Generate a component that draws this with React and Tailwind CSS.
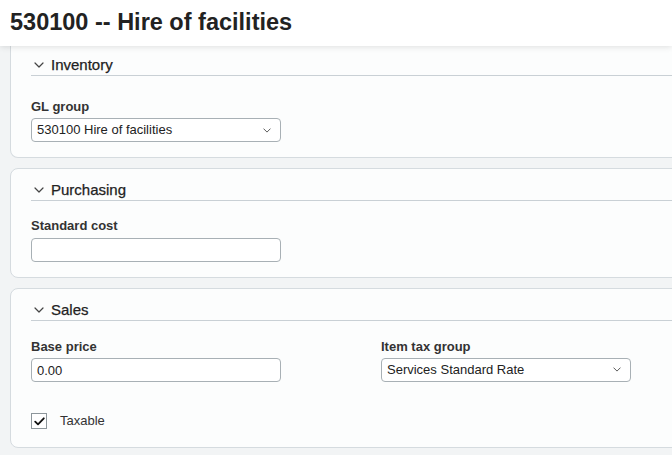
import React, { useState } from "react";

const Chevron = ({ className }) => (
    <svg className={className} viewBox="0 0 10 6" fill="none" stroke="currentColor" strokeWidth="1.2" strokeLinecap="round" strokeLinejoin="round">
        <path d="M1 1l4 4 4-4" />
    </svg>
);

const SectionHeader = ({ title }) => (
    <div className="flex items-center h-[20px] border-b border-[#c9d0d5] box-content">
        <Chevron className="w-[10px] h-[6px] ml-[3px] mr-[7px] text-[#444]" />
        <span className="text-[15px] font-medium text-[#222] leading-[20px] [-webkit-text-stroke:0.25px_#222]">{title}</span>
    </div>
);

const Label = ({ children }) => (
    <label className="block text-[13px] font-bold text-[#333] leading-[16px] mb-[3px]">{children}</label>
);

const SelectBox = ({ value }) => (
    <div className="w-[250px] h-[24px] border border-[#a8b0b5] rounded-[4px] bg-white flex items-center justify-between pl-[5px] pr-[9px]">
        <span className="text-[13px] text-[#222]">{value}</span>
        <Chevron className="w-[8px] h-[5px] text-[#555]" />
    </div>
);

const TextBox = ({ value }) => (
    <input
        type="text"
        readOnly
        value={value}
        className="w-[250px] h-[24px] border border-[#a8b0b5] rounded-[4px] bg-white px-[5px] text-[13px] text-[#222] focus:outline-none"
    />
);

const App = () => {
    const [taxable, setTaxable] = useState(true);

    return (
        <div className="w-[672px] h-[455px] overflow-hidden bg-[#f2f4f5] font-['Liberation_Sans',Arial,sans-serif]">
            {/* Page header */}
            <header className="relative z-10 h-[46px] bg-white shadow-[0_1px_6px_rgba(0,0,0,0.12)] pl-[10px] flex items-center">
                <h1 className="text-[23.5px] font-bold text-[#222] leading-none">530100 -- Hire of facilities</h1>
            </header>

            <div className="pl-[10px] flex flex-col gap-[10px]">
                {/* Inventory */}
                <div className="w-[700px] bg-[#fcfdfd] border border-t-0 border-[#d5dbdf] rounded-b-[8px] pl-[20px] pt-[9px] pb-[15px]">
                    <SectionHeader title="Inventory" />
                    <div className="mt-[23px]">
                        <Label>GL group</Label>
                        <SelectBox value="530100 Hire of facilities" />
                    </div>
                </div>

                {/* Purchasing */}
                <div className="w-[700px] bg-[#fcfdfd] border border-[#d5dbdf] rounded-[8px] pl-[20px] pt-[11px] pb-[15px]">
                    <SectionHeader title="Purchasing" />
                    <div className="mt-[17px]">
                        <Label>Standard cost</Label>
                        <TextBox value="" />
                    </div>
                </div>

                {/* Sales */}
                <div className="w-[700px] bg-[#fcfdfd] border border-[#d5dbdf] rounded-[8px] pl-[20px] pt-[11px] pb-[16px]">
                    <SectionHeader title="Sales" />
                    <div className="mt-[18px] grid grid-cols-[350px_350px]">
                        <div>
                            <Label>Base price</Label>
                            <TextBox value="0.00" />
                        </div>
                        <div>
                            <Label>Item tax group</Label>
                            <SelectBox value="Services Standard Rate" />
                        </div>
                    </div>
                    <label className="mt-[29px] h-[20px] flex items-center cursor-pointer">
                        <input
                            type="checkbox"
                            className="hidden"
                            checked={taxable}
                            onChange={(e) => setTaxable(e.target.checked)}
                        />
                        <span className="w-[16px] h-[16px] border border-[#8d969b] bg-white flex items-center justify-center">
                            {taxable && (
                                <svg className="w-[11px] h-[9px]" viewBox="0 0 11 9" fill="none" stroke="#111" strokeWidth="1.8" strokeLinecap="round" strokeLinejoin="round">
                                    <path d="M1.2 4.6l2.8 2.8L9.8 1.3" />
                                </svg>
                            )}
                        </span>
                        <span className="ml-[13px] text-[13px] text-[#333]">Taxable</span>
                    </label>
                </div>
            </div>
        </div>
    );
};

export default App;
